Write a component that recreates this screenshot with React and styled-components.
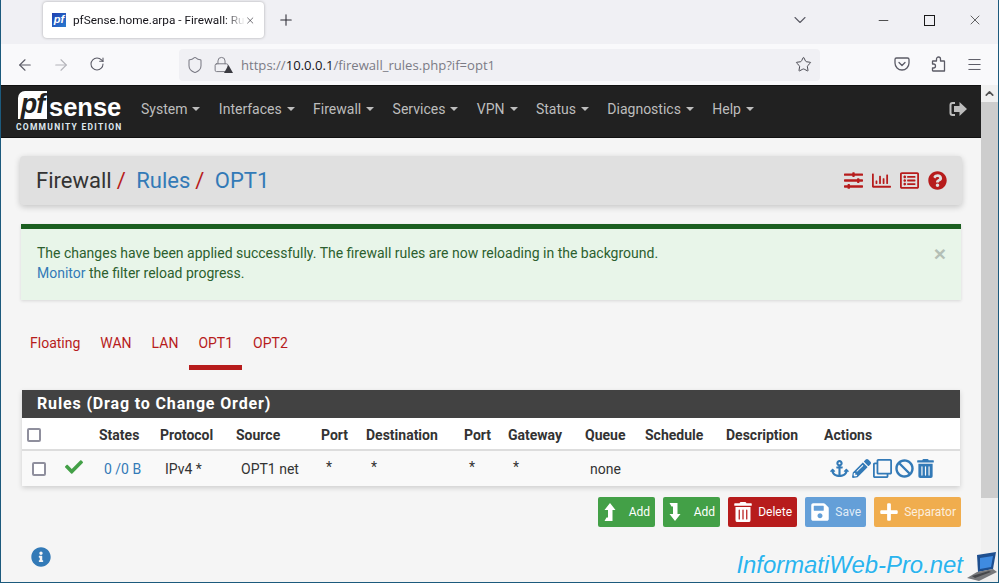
import React from 'react';
import styled, { createGlobalStyle } from 'styled-components';
import {
  ArrowLeft, ArrowRight, RotateCw, Shield, Lock, Star, Menu,
  ChevronDown, ChevronUp, X, Plus, Minus,
} from 'lucide-react';
import {
  FaAnchor, FaPencilAlt, FaRegClone, FaBan, FaTrashAlt, FaCheck, FaInfoCircle,
  FaSlidersH, FaRegChartBar, FaRegListAlt, FaQuestionCircle, FaSave, FaPlus,
} from 'react-icons/fa';

const GlobalStyle = createGlobalStyle`
  html, body { margin: 0; height: 100%; overflow: hidden; }
  body { font-family: Roboto, "Liberation Sans", sans-serif; background: #f5f5f5; }
  * { box-sizing: border-box; }
`;

const Frame = styled.div`
  position: relative;
  width: 999px;
  height: 583px;
  display: flex;
  flex-direction: column;
  overflow: hidden;
  border: 1px solid #1c5a7d;
  border-top: 0;
`;

/* browser chrome */
const TabStrip = styled.div`
  height: 44px;
  flex: none;
  display: flex;
  align-items: center;
  padding-left: 42px;
  background: #f0f0f4;
  color: #2b2a33;
`;

const Tab = styled.div`
  width: 221px;
  height: 36px;
  margin-top: -4px;
  display: flex;
  align-items: center;
  padding: 0 9px 0 9px;
  background: #fff;
  border-radius: 4px;
  box-shadow: 0 0 3px rgba(0, 0, 0, 0.3);
`;

const Favicon = styled.span`
  width: 14px;
  height: 14px;
  flex: none;
  margin-right: 7px;
  background: linear-gradient(135deg, #1f3fb0, #2a7bd0);
  color: #fff;
  font: italic 700 11px/13px "Liberation Sans", sans-serif;
  text-align: center;
`;

const TabTitle = styled.span`
  flex: 1;
  white-space: nowrap;
  font: 11.8px Roboto, sans-serif;
  color: #15141a;
  -webkit-mask-image: linear-gradient(to right, #000 88%, transparent 100%);
  mask-image: linear-gradient(to right, #000 88%, transparent 100%);
`;

const NewTab = styled.span`
  display: flex;
  margin: -4px 0 0 13px;
`;

const StripRight = styled.div`
  margin-left: auto;
  margin-top: -4px;
  display: flex;
  align-items: center;
`;

const ListAll = styled.span`
  display: flex;
  margin-right: 50px;
  color: #5b5b66;
`;

const WinButton = styled.span`
  width: 46px;
  display: flex;
  justify-content: center;
  color: #1a1a1a;
`;

const Toolbar = styled.div`
  height: 41px;
  flex: none;
  display: flex;
  align-items: center;
  background: #f9f9fb;
  color: #5b5b66;
`;

const ToolButton = styled.span`
  width: 36px;
  display: flex;
  justify-content: center;
  color: ${p => (p.$off ? '#b4b4ba' : '#5b5b66')};
`;

const NavButtons = styled.div`
  display: flex;
  width: 178px;
  padding-left: 6px;
`;

const UrlBar = styled.div`
  width: 641px;
  height: 32px;
  display: flex;
  align-items: center;
  padding: 0 8px 0 7px;
  background: #f0f0f4;
  border-radius: 4px;
  font: 13.1px "Open Sans", sans-serif;
  color: #7b7b85;
`;

const LockWrap = styled.span`
  position: relative;
  display: flex;
  margin: 0 11px 0 9px;
`;

const LockWarn = styled.svg`
  position: absolute;
  right: -3px;
  bottom: 0;
`;

const UrlHost = styled.span`
  color: #15141a;
`;

const UrlEnd = styled.span`
  margin-left: auto;
  display: flex;
  color: #4a4a52;
`;

const ToolRight = styled.div`
  display: flex;
  margin-left: 64px;
`;

const ToolSlot = styled.span`
  width: 36px;
  display: flex;
  justify-content: center;
`;

/* page */
const Viewport = styled.div`
  flex: 1;
  min-height: 0;
  display: flex;
`;

const Content = styled.div`
  flex: 1;
  min-width: 0;
  background: #f5f5f5;
`;

const ScrollTrack = styled.div`
  width: 17px;
  flex: none;
  display: flex;
  flex-direction: column;
  background: #f0f0f0;
`;

const ScrollArrow = styled.div`
  height: 17px;
  display: flex;
  align-items: center;
  justify-content: center;
  color: #505050;
`;

const ScrollThumb = styled.div`
  height: 396px;
  background: #cdcdcd;
`;

const Navbar = styled.div`
  height: 53px;
  display: flex;
  align-items: center;
  padding: 0 13px 0 15px;
  background: #212121;
  border-top: 1px solid #111;
  border-bottom: 1px solid #111;
`;

const Logo = styled.div`
  width: 110px;
  margin: 0 15px 2px 0;
  display: flex;
  flex-direction: column;
  align-items: flex-start;
  color: #fff;
`;

const LogoTop = styled.div`
  display: flex;
  align-items: flex-end;
  height: 30px;
  margin-left: 2px;
`;

const LogoBadge = styled.span`
  width: 29px;
  height: 28px;
  background: #fff;
  color: #212121;
  border-radius: 7px 0 0 0;
  font: italic 700 27px/26px "Liberation Sans", sans-serif;
  letter-spacing: -1px;
  text-align: center;
`;

const LogoWord = styled.span`
  font: 700 25.5px/24px "Liberation Sans", sans-serif;
  margin-left: 2px;
`;

const LogoSub = styled.div`
  margin-top: 3px;
  font: 700 8.5px/10px Roboto, sans-serif;
  letter-spacing: 1.25px;
  color: #dfe8ef;
  white-space: nowrap;
`;

const NavItem = styled.a`
  display: flex;
  align-items: center;
  gap: 5px;
  margin: 0 18.4px 6px 0;
  font-size: 14px;
  color: #bdbdbd;
  white-space: nowrap;
`;

const Caret = styled.i`
  width: 0;
  height: 0;
  border-top: 4px solid #bdbdbd;
  border-left: 4px solid transparent;
  border-right: 4px solid transparent;
`;

const LogoutIcon = styled.svg`
  margin: 0 1px 6px auto;
  color: #bdbdbd;
`;

const Main = styled.div`
  padding: 18px 19px 0 19px;
`;

const PageHeader = styled.div`
  height: 49px;
  display: flex;
  align-items: center;
  padding: 0 15px 0 16px;
  background: #e0e0e0;
  border-radius: 4px;
  box-shadow: 0 2px 6px rgba(0, 0, 0, 0.2);
  font-size: 22px;
  color: #333;
`;

const Crumb = styled.span`
  color: ${p => (p.$link ? '#337ab7' : '#333')};
`;

const Slash = styled.span`
  color: #b71c1c;
  margin: 0 10.5px 0 5px;
`;

const HeaderIcons = styled.div`
  margin-left: auto;
  display: flex;
  align-items: center;
  gap: 9px;
  color: #b71c1c;
`;

const Alert = styled.div`
  position: relative;
  margin: 19px 1px 0 1px;
  height: 76px;
  padding: 14px 16px;
  background: #e8f5e9;
  border-top: 5px solid #1b5e20;
  box-shadow: 0 1px 3px rgba(0, 0, 0, 0.12);
  font-size: 14px;
  line-height: 20px;
  color: #2c5f2e;
`;

const AlertLink = styled.a`
  color: #337ab7;
`;

const AlertClose = styled.span`
  position: absolute;
  top: 14px;
  right: 15px;
  font: 700 21px/21px "Liberation Sans", sans-serif;
  color: #b4bfb6;
`;

const Tabs = styled.div`
  margin-top: 25px;
  height: 45px;
  display: flex;
`;

const TabLink = styled.a`
  padding: ${p => (p.$active ? '8px 9px 0 9px' : '8px 10px 0 10px')};
  margin: ${p => (p.$active ? '0 1px' : '0')};
  border-bottom: 5px solid ${p => (p.$active ? '#b71c1c' : 'transparent')};
  font-size: 14px;
  line-height: 20px;
  color: #b71c1c;
`;

const Panel = styled.div`
  margin: 20px 2px 0 2px;
  background: #fff;
  box-shadow: 0 2px 5px rgba(0, 0, 0, 0.16);
`;

const PanelHeading = styled.div`
  height: 28px;
  padding-left: 15px;
  background: #424242;
  color: #fff;
  font-size: 16px;
  font-weight: 700;
  line-height: 28px;
  letter-spacing: 0.85px;
`;

const RulesTable = styled.table`
  width: 100%;
  table-layout: fixed;
  border-collapse: collapse;
  font-size: 14px;
  color: #333;
`;

const Th = styled.th`
  height: 32px;
  padding: 2px 0 0 5px;
  text-align: left;
  font-weight: 700;
  font-size: 14px;
  color: #333;
  white-space: nowrap;
  border-bottom: 2px solid #ddd;
`;

const Row = styled.tr`
  background: #f9f9f9;
`;

const Td = styled.td`
  height: 36px;
  padding: 0 0 0 10px;
  white-space: nowrap;
`;

const Star2 = styled.span`
  display: inline-block;
  position: relative;
  top: -2px;
`;

const Check = styled.span`
  display: block;
  width: 14px;
  height: 14px;
  background: #fff;
  border: 2px solid #8f8f9d;
  border-radius: 2px;
`;

const States = styled.a`
  color: #337ab7;
`;

const Actions = styled.div`
  display: flex;
  align-items: center;
  color: #337ab7;
`;

const ActionSlot = styled.span`
  width: 21.5px;
  flex: none;
  display: flex;
  justify-content: center;
  font-size: 19px;
`;

const ButtonRow = styled.div`
  margin: 11px 0 0 0;
  display: flex;
  justify-content: flex-end;
  gap: 8px;
  padding-right: 1px;
`;

const Btn = styled.a`
  height: 30px;
  display: flex;
  align-items: center;
  justify-content: space-between;
  width: ${p => p.$w}px;
  padding: 0 5px 0 5px;
  background: ${p => p.$bg};
  border-radius: 2px;
  color: ${p => (p.$soft ? 'rgba(255, 255, 255, 0.82)' : '#fff')};
  font-size: 12px;
`;

const InfoIcon = styled.div`
  margin: 20px 0 0 11px;
  display: flex;
  color: #337ab7;
`;

const Watermark = styled.div`
  position: absolute;
  right: 0;
  bottom: 0;
  display: flex;
  align-items: flex-end;
  gap: 3px;
  font: italic 400 23.9px/34px "Liberation Sans", sans-serif;
  color: #2ab4ee;
  text-shadow: 0 0 2px rgba(255, 255, 255, 0.9);
`;

const headers = ['Source', 'Port', 'Destination', 'Port', 'Gateway', 'Queue', 'Schedule', 'Description', 'Actions'];
const colWidths = [33, 39, 61, 76, 85, 45, 98, 44, 77, 60, 81, 98, 141];
const navItems = ['System', 'Interfaces', 'Firewall', 'Services', 'VPN', 'Status', 'Diagnostics', 'Help'];
const actionIcons = [FaAnchor, FaPencilAlt, FaRegClone, FaBan, FaTrashAlt];

const PocketIcon = () => (
  <svg width="16" height="16" viewBox="0 0 16 16" fill="none" stroke="currentColor" strokeWidth="1.3">
    <path d="M2.5 2h11A1.5 1.5 0 0 1 15 3.5V7A7 7 0 0 1 1 7V3.5A1.5 1.500 0 0 1 2.5 2z" />
    <path d="M5 6.5l3 3 3-3" strokeLinecap="round" strokeLinejoin="round" />
  </svg>
);

const ExtensionIcon = () => (
  <svg width="15" height="16" viewBox="0 0 15 16" fill="none" stroke="currentColor" strokeWidth="1.3" strokeLinejoin="round">
    <path d="M5.500 5V3a2 2 0 0 1 4 0v2h3.500a.5.5 0 0 1 .5.5V15H2a.5.5 0 0 1-.5-.5V12h1a2 2 0 0 0 0-4h-1V5.500A.5.5 0 0 1 2 5z" />
  </svg>
);

const RestoreIcon = () => (
  <svg width="11" height="11" viewBox="0 0 11 11" fill="none" stroke="currentColor" strokeWidth="1">
    <rect x="0.5" y="0.5" width="10" height="10" />
  </svg>
);

const LaptopIcon = () => (
  <svg width="32" height="30" viewBox="0 0 32 30">
    <path d="M11 3L30 0l-3 17-15 3z" fill="#1e4f8f" />
    <path d="M14 6l13-2-2 11-11 2z" fill="#3f8be0" />
    <path d="M11 20l16-3 4 3-18 9-12-3z" fill="#77797c" />
    <path d="M6 24l17-5 2 1-16 6z" fill="#45474a" />
  </svg>
);

// font awesome 4 level-up / level-down, the newer set has a different foot
const LevelUpIcon = () => (
  <svg width="13" height="20" viewBox="-1 0 13 20" fill="currentColor">
    <path d="M6 1l5.500 7H8.500v11H.5l2-3.500H4V8H.5z" />
  </svg>
);

const LevelDownIcon = () => (
  <svg width="13" height="20" viewBox="-1 0 13 20" fill="currentColor">
    <path d="M.5 1h8v11h3L6 19 .5 12H4V4.500H2.500z" />
  </svg>
);

const App = () => (
  <Frame>
    <GlobalStyle />
    <TabStrip>
      <Tab>
        <Favicon>pf</Favicon>
        <TabTitle>pfSense.home.arpa - Firewall: Ru</TabTitle>
        <X size={15} strokeWidth={1.5} />
      </Tab>
      <NewTab><Plus size={18} strokeWidth={1.4} /></NewTab>
      <StripRight>
        <ListAll><ChevronDown size={20} strokeWidth={1.3} /></ListAll>
        <WinButton><Minus size={15} strokeWidth={1.2} /></WinButton>
        <WinButton><RestoreIcon /></WinButton>
        <WinButton><X size={16} strokeWidth={1} /></WinButton>
      </StripRight>
    </TabStrip>
    <Toolbar>
      <NavButtons>
        <ToolButton><ArrowLeft size={18} strokeWidth={1.5} /></ToolButton>
        <ToolButton $off><ArrowRight size={18} strokeWidth={1.5} /></ToolButton>
        <ToolButton><RotateCw size={16} strokeWidth={1.6} /></ToolButton>
      </NavButtons>
      <UrlBar>
        <Shield size={18} strokeWidth={1.4} />
        <LockWrap>
          <Lock size={17} strokeWidth={1.4} />
          <LockWarn width="9" height="8" viewBox="0 0 9 8"><path d="M4.5 0L9 8H0z" fill="#3a3a40" /></LockWarn>
        </LockWrap>
        <span>https://<UrlHost>10.0.0.1</UrlHost>/firewall_rules.php?if=opt1</span>
        <UrlEnd><Star size={17} strokeWidth={1.4} /></UrlEnd>
      </UrlBar>
      <ToolRight>
        <ToolSlot><PocketIcon /></ToolSlot>
        <ToolSlot><ExtensionIcon /></ToolSlot>
        <ToolSlot><Menu size={17} strokeWidth={1.4} /></ToolSlot>
      </ToolRight>
    </Toolbar>
    <Viewport>
      <Content>
        <Navbar>
          <Logo>
            <LogoTop>
              <LogoBadge>pf</LogoBadge>
              <LogoWord>sense</LogoWord>
            </LogoTop>
            <LogoSub>COMMUNITY EDITION</LogoSub>
          </Logo>
          {navItems.map(item => (
            <NavItem key={item}>{item}<Caret /></NavItem>
          ))}
          <LogoutIcon width="18" height="16" viewBox="0 0 18 16" fill="currentColor">
            <path d="M6 1H3.5A3 3 0 0 0 .5 4v8a3 3 0 0 0 3 3H6v-2H3.5a1 1 0 0 1-1-1V4a1 1 0 0 1 1-1H6z" />
            <path d="M10.5 1L18 8l-7.5 7v-4H5V5h5.500z" />
          </LogoutIcon>
        </Navbar>
        <Main>
          <PageHeader>
            <Crumb>Firewall</Crumb><Slash>/</Slash>
            <Crumb $link>Rules</Crumb><Slash>/</Slash>
            <Crumb $link>OPT1</Crumb>
            <HeaderIcons>
              <FaSlidersH size={19} />
              <FaRegChartBar size={19} />
              <FaRegListAlt size={19} />
              <FaQuestionCircle size={19} />
            </HeaderIcons>
          </PageHeader>
          <Alert>
            The changes have been applied successfully. The firewall rules are now reloading in the background.<br />
            <AlertLink>Monitor</AlertLink> the filter reload progress.
            <AlertClose>×</AlertClose>
          </Alert>
          <Tabs>
            <TabLink>Floating</TabLink>
            <TabLink>WAN</TabLink>
            <TabLink>LAN</TabLink>
            <TabLink $active>OPT1</TabLink>
            <TabLink>OPT2</TabLink>
          </Tabs>
          <Panel>
            <PanelHeading>Rules (Drag to Change Order)</PanelHeading>
            <RulesTable>
              <colgroup>
                {colWidths.map((w, i) => <col key={i} width={w} />)}
              </colgroup>
              <thead>
                <tr>
                  <Th><Check /></Th>
                  <Th />
                  <Th>States</Th>
                  <Th>Protocol</Th>
                  {headers.map((h, i) => <Th key={i}>{h}</Th>)}
                </tr>
              </thead>
              <tbody>
                <Row>
                  <Td><Check /></Td>
                  <Td><FaCheck size={18} color="#43a047" /></Td>
                  <Td><States>0 /0 B</States></Td>
                  <Td>IPv4 *</Td>
                  <Td>OPT1 net</Td>
                  <Td><Star2>*</Star2></Td>
                  <Td><Star2>*</Star2></Td>
                  <Td><Star2>*</Star2></Td>
                  <Td><Star2>*</Star2></Td>
                  <Td>none</Td>
                  <Td />
                  <Td />
                  <Td>
                    <Actions>
                      {actionIcons.map((Icon, i) => <ActionSlot key={i}><Icon /></ActionSlot>)}
                    </Actions>
                  </Td>
                </Row>
              </tbody>
            </RulesTable>
          </Panel>
          <ButtonRow>
            <Btn $w={57} $bg="#43a047"><LevelUpIcon />Add</Btn>
            <Btn $w={57} $bg="#43a047"><LevelDownIcon />Add</Btn>
            <Btn $w={69} $bg="#b71c1c"><FaTrashAlt size={20} />Delete</Btn>
            <Btn $w={61} $bg="#649fd8" $soft><FaSave size={20} color="#fff" />Save</Btn>
            <Btn $w={87} $bg="#f0ad4e" $soft><FaPlus size={20} color="#fff" />Separator</Btn>
          </ButtonRow>
          <InfoIcon><FaInfoCircle size={20} /></InfoIcon>
        </Main>
      </Content>
      <ScrollTrack>
        <ScrollArrow><ChevronUp size={13} strokeWidth={3} /></ScrollArrow>
        <ScrollThumb />
      </ScrollTrack>
    </Viewport>
    <Watermark>InformatiWeb-Pro.net<LaptopIcon /></Watermark>
  </Frame>
);

export default App;
